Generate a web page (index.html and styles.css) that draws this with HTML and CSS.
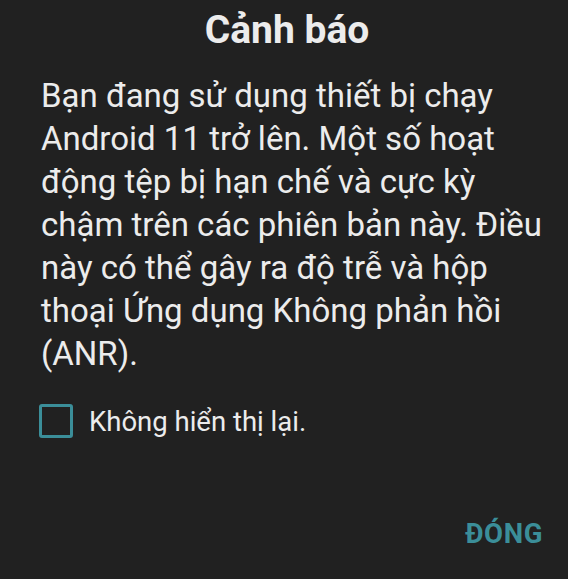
FILE: index.html
```html
<!DOCTYPE html>
<html lang="vi">
<head>
<meta charset="utf-8">
<link rel="stylesheet" href="styles.css">
</head>
<body>
<div class="dialog">
  <h1 class="title">Cảnh báo</h1>
  <p class="message">Bạn đang sử dụng thiết bị chạy Android 11 trở lên. Một số hoạt động tệp bị hạn chế và cực kỳ chậm trên các phiên bản này. Điều này có thể gây ra độ trễ và hộp thoại Ứng dụng Không phản hồi (ANR).</p>
  <label class="check">
    <span class="box"></span>
    <span class="check-label">Không hiển thị lại.</span>
  </label>
  <div class="actions">
    <button class="btn">ĐÓNG</button>
  </div>
</div>
</body>
</html>
```
FILE: styles.css
```css
html, body {
  margin: 0;
  padding: 0;
  background: #212121;
}
body {
  width: 568px;
  height: 579px;
  overflow: hidden;
  font-family: Roboto, "Noto Sans", sans-serif;
  color: #ececec;
}
.dialog {
  display: flex;
  flex-direction: column;
  padding: 0 12px 0 41px;
}
.title {
  margin: 6px 0 0 0;
  text-align: center;
  font-size: 39px;
  font-weight: 700;
  line-height: 48px;
  padding-right: 23px;
}
.message {
  margin: 20px 0 0 0;
  font-size: 33px;
  line-height: 43px;
}
.check {
  display: flex;
  align-items: center;
  gap: 16px;
  margin-top: 29px;
  margin-left: -2px;
}
.box {
  width: 28px;
  height: 28px;
  border: 3px solid #3b8e99;
  border-radius: 3px;
}
.check-label {
  font-size: 27.5px;
}
.actions {
  display: flex;
  justify-content: flex-end;
  margin-top: 79px;
}
.btn {
  background: none;
  border: 0;
  padding: 0;
  margin-right: 13px;
  font-family: Roboto, sans-serif;
  font-weight: 700;
  font-size: 27.5px;
  color: #3b8e99;
  letter-spacing: 0.6px;
}
```
